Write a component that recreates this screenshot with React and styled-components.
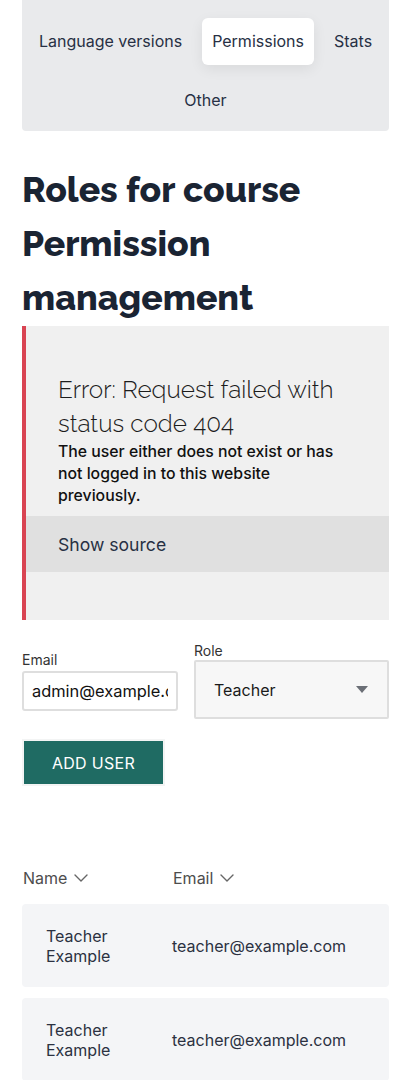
import React from "react";
import styled, { createGlobalStyle } from "styled-components";
import { ChevronDown } from "lucide-react";

const Global = createGlobalStyle`
  html, body { margin: 0; padding: 0; background: #ffffff; }
  body { font-family: Inter, "Noto Sans", sans-serif; color: #1a2233; }
  * { box-sizing: border-box; }
`;

const Page = styled.div`
  padding: 0 22px;
`;

const TabBar = styled.nav`
  background: #e9eaec;
  border-radius: 0 0 4px 4px;
  padding: 18px 4px 7px;
  display: flex;
  flex-wrap: wrap;
  justify-content: center;
  column-gap: 10px;
  row-gap: 12px;
`;

const Tab = styled.div`
  padding: 13px 10px;
  font-size: 16px;
  line-height: 21px;
  color: #273044;
  border-radius: 6px;
  background: ${(p) => (p.$active ? "#ffffff" : "transparent")};
  box-shadow: ${(p) => (p.$active ? "0 4px 14px rgba(0,0,0,0.07)" : "none")};
`;

const Heading = styled.h1`
  margin: 32px 0 0;
  font-family: Raleway, Lato, sans-serif;
  font-weight: 800;
  font-size: 35.5px;
  line-height: 54px;
  color: #1a2433;
`;

const ErrorBox = styled.section`
  margin-top: 1px;
  background: #f0f0f0;
  border-left: 4px solid #d94452;
  padding: 47px 0 48px;
`;

const ErrorTitle = styled.div`
  padding: 0 48px 0 32px;
  font-family: Raleway, Lato, sans-serif;
  font-weight: 300;
  font-size: 24.3px;
  line-height: 34px;
  color: #1c1c1c;
`;

const ErrorMessage = styled.div`
  padding: 0 48px 0 32px;
  font-size: 15.8px;
  font-weight: 500;
  line-height: 22px;
  color: #111111;
`;

const SourceToggle = styled.div`
  margin-top: 9px;
  background: #e0e0e0;
  height: 56px;
  display: flex;
  align-items: center;
  padding: 0 32px;
  font-size: 17.6px;
  color: #273044;
`;

const Form = styled.div`
  margin-top: 22px;
  display: flex;
  align-items: center;
  gap: 16px;
`;

const Field = styled.label`
  display: flex;
  flex-direction: column;
  width: ${(p) => p.$width};
`;

const Label = styled.span`
  font-size: 14px;
  line-height: 17px;
  color: #333333;
  margin-bottom: ${(p) => p.$gap || "3px"};
`;

const Input = styled.input`
  height: 40px;
  width: 100%;
  border: 2px solid #dedede;
  border-radius: 3px;
  background: #ffffff;
  padding: 0 8px;
  font-family: Inter, sans-serif;
  font-size: 16.4px;
  color: #111111;
  outline: none;
`;

const Select = styled.div`
  height: 59px;
  border: 2px solid #dedede;
  border-radius: 2px;
  background: #f7f7f7;
  display: flex;
  align-items: center;
  justify-content: space-between;
  padding: 0 19px 0 18px;
  font-size: 16px;
  color: #1a1a1a;
`;

const Caret = styled.span`
  width: 0;
  height: 0;
  border-left: 6px solid transparent;
  border-right: 6px solid transparent;
  border-top: 7px solid #6b6f76;
`;

const Button = styled.button`
  display: block;
  margin-top: 20px;
  width: 143px;
  height: 47px;
  border: 2px solid #f3f4f4;
  background: #1f6b63;
  color: #ffffff;
  font-family: Inter, sans-serif;
  font-size: 16px;
  letter-spacing: 0.3px;
  padding: 0;
  cursor: pointer;
`;

const Table = styled.div`
  margin-top: 80px;
  display: flex;
  flex-direction: column;
  gap: 11px;
`;

const HeaderRow = styled.div`
  display: grid;
  grid-template-columns: 150px 1fr;
  padding-left: 1px;
  margin-bottom: 3px;
`;

const HeaderCell = styled.div`
  display: flex;
  align-items: center;
  gap: 2px;
  font-size: 16px;
  line-height: 22px;
  color: #4d4d4d;
  svg { color: #666; }
`;

const Row = styled.div`
  display: grid;
  grid-template-columns: 150px 1fr;
  align-items: center;
  min-height: 83px;
  background: #f4f5f7;
  border-radius: 4px;
`;

const NameCell = styled.div`
  padding: 0 24px 0 24px;
  font-size: 16px;
  line-height: 20px;
  color: #2b3141;
`;

const EmailCell = styled.div`
  font-size: 16px;
  line-height: 20px;
  color: #2b3141;
`;

const users = [
  { name: "Teacher Example", email: "teacher@example.com" },
  { name: "Teacher Example", email: "teacher@example.com" },
];

export default function App() {
  return (
    <>
      <Global />
      <Page>
        <TabBar>
          <Tab>Language versions</Tab>
          <Tab $active>Permissions</Tab>
          <Tab>Stats</Tab>
          <Tab>Other</Tab>
        </TabBar>
        <Heading>
          Roles for course
          <br />
          Permission management
        </Heading>
        <ErrorBox>
          <ErrorTitle>Error: Request failed with status code 404</ErrorTitle>
          <ErrorMessage>
            The user either does not exist or has not logged in to this website previously.
          </ErrorMessage>
          <SourceToggle>Show source</SourceToggle>
        </ErrorBox>
        <Form>
          <Field $width="156px">
            <Label>Email</Label>
            <Input defaultValue="admin@example.com" />
          </Field>
          <Field $width="195px">
            <Label $gap="1px">Role</Label>
            <Select>
              Teacher
              <Caret />
            </Select>
          </Field>
        </Form>
        <Button>ADD USER</Button>
        <Table>
          <HeaderRow>
            <HeaderCell>
              Name <ChevronDown size={24} strokeWidth={1.4} />
            </HeaderCell>
            <HeaderCell>
              Email <ChevronDown size={24} strokeWidth={1.4} />
            </HeaderCell>
          </HeaderRow>
          {users.map((u, i) => (
            <Row key={i}>
              <NameCell>{u.name}</NameCell>
              <EmailCell>{u.email}</EmailCell>
            </Row>
          ))}
        </Table>
      </Page>
    </>
  );
}
